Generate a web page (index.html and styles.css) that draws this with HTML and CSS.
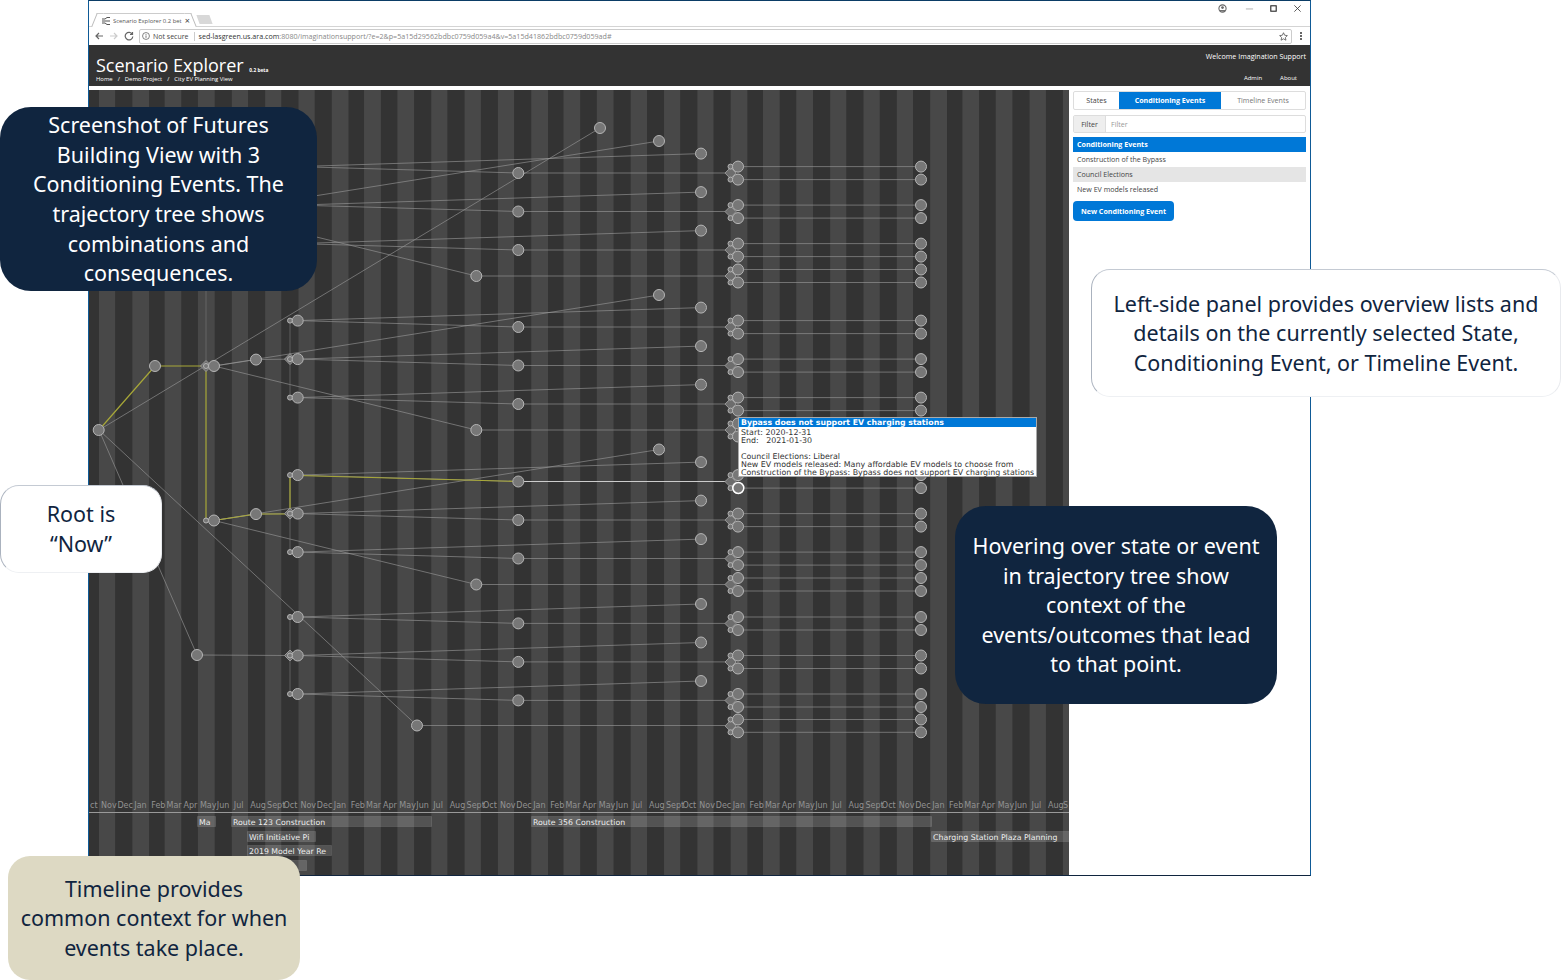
FILE: index.html
```html
<!DOCTYPE html>
<html lang="en">
<head>
    <meta charset="UTF-8">
    <meta name="viewport" content="width=device-width, initial-scale=1.0">
    <title>Scenario Explorer</title>
    <link rel="stylesheet" href="styles.css">
</head>
<body>
    <div class="browser">
        <!-- Tab strip -->
        <div class="tabstrip">
            <div class="tab">
                <svg class="tab-icon" viewBox="0 0 10 10" width="10" height="10">
                    <path d="M1 3h3M1 5h3M1 7h3M4 3l2-1.500h3M4 7l2 1.500h3M4 5h5" fill="none" stroke="#555" stroke-width="1"/>
                </svg>
                <span class="tab-title">Scenario Explorer 0.2 bet</span>
                <span class="tab-close">×</span>
            </div>
            <div class="new-tab"></div>
            <div class="window-controls">
                <svg class="account" viewBox="0 0 10 10" width="9" height="9"><circle cx="5" cy="5" r="4" fill="none" stroke="#666" stroke-width="1.200"/><circle cx="5" cy="4" r="1.500" fill="#666"/><path d="M2 7.500h6" stroke="#666" stroke-width="1.500"/></svg>
                <svg viewBox="0 0 10 10" width="9" height="9"><path d="M1 5.500h8" stroke="#aaa" stroke-width="1"/></svg>
                <svg viewBox="0 0 10 10" width="9" height="9"><rect x="2" y="2" width="6" height="6" fill="none" stroke="#222" stroke-width="1.200"/></svg>
                <svg viewBox="0 0 10 10" width="9" height="9"><path d="M1.500 1.500l7 7M8.500 1.500l-7 7" stroke="#333" stroke-width="0.900"/></svg>
            </div>
        </div>

        <!-- Address bar -->
        <div class="addressbar">
            <svg class="nav-icon" viewBox="0 0 10 10" width="10" height="10"><path d="M9 5H2M5 2L2 5l3 3" fill="none" stroke="#666" stroke-width="1.200"/></svg>
            <svg class="nav-icon" viewBox="0 0 10 10" width="10" height="10"><path d="M1 5h7M5 2l3 3-3 3" fill="none" stroke="#ccc" stroke-width="1.200"/></svg>
            <svg class="nav-icon" viewBox="0 0 10 10" width="10" height="10"><path d="M8.300 3.200A3.800 3.800 0 1 0 8.800 5.500M8.500 1v2.500H6" fill="none" stroke="#666" stroke-width="1.200"/></svg>
            <div class="omnibox">
                <svg viewBox="0 0 10 10" width="8" height="8"><circle cx="5" cy="5" r="4.300" fill="none" stroke="#555" stroke-width="0.900"/><path d="M5 4.300v3M5 2.500v1" stroke="#555" stroke-width="1"/></svg>
                <span class="not-secure">Not secure</span>
                <span class="url"><b>sed-lasgreen.us.ara.com</b>:8080/imaginationsupport/?e=2&amp;p=5a15d29562bdbc0759d059a4&amp;v=5a15d41862bdbc0759d059ad#</span>
                <svg class="star" viewBox="0 0 10 10" width="9" height="9"><path d="M5 .8l1.300 2.800 3 .4-2.200 2.100.6 3L5 7.600 2.300 9.100l.6-3L.7 4l3-.4z" fill="none" stroke="#555" stroke-width="0.900"/></svg>
            </div>
            <div class="menu-dots"><i></i><i></i><i></i></div>
        </div>

        <!-- App header -->
        <div class="app-header">
            <div class="brand">
                <div class="brand-title">Scenario Explorer <small>0.2 beta</small></div>
                <div class="crumbs"><span>Home</span><span>/</span><span>Demo Project</span><span>/</span><span>City EV Planning View</span></div>
            </div>
            <div class="user-area">
                <div>Welcome Imagination Support</div>
                <div class="user-links"><span>Admin</span><span>About</span></div>
            </div>
        </div>

        <div class="app-body">
            <div class="chart" id="chart">
                <div class="tooltip">
                    <div class="tooltip-title">Bypass does not support EV charging stations</div>
                    <div class="tooltip-text">Start: 2020-12-31
End:   2021-01-30

Council Elections: Liberal
New EV models released: Many affordable EV models to choose from
Construction of the Bypass: Bypass does not support EV charging stations</div>
                </div>
            </div>

            <!-- Right panel -->
            <div class="panel">
                <div class="panel-tabs">
                    <div class="panel-tab states">States</div>
                    <div class="panel-tab conditioning active">Conditioning Events</div>
                    <div class="panel-tab timeline">Timeline Events</div>
                </div>
                <div class="filter">
                    <div class="filter-label">Filter</div>
                    <div class="filter-input">Filter</div>
                </div>
                <div class="list">
                    <div class="list-item selected">Conditioning Events</div>
                    <div class="list-item">Construction of the Bypass</div>
                    <div class="list-item shaded">Council Elections</div>
                    <div class="list-item">New EV models released</div>
                </div>
                <div class="new-button">New Conditioning Event</div>
            </div>
        </div>
    </div>

    <!-- Callouts -->
    <div class="callout navy callout-futures">Screenshot of Futures<br>Building View with 3<br>Conditioning Events. The<br>trajectory tree shows<br>combinations and<br>consequences.</div>
    <div class="callout white callout-panel">Left-side panel provides overview lists and<br>details on the currently selected State,<br>Conditioning Event, or Timeline Event.</div>
    <div class="callout white callout-root">Root is<br>“Now”</div>
    <div class="callout navy callout-hover">Hovering over state or event<br>in trajectory tree show<br>context of the<br>events/outcomes that lead<br>to that point.</div>
    <div class="callout beige callout-timeline">Timeline provides<br>common context for when<br>events take place.</div>

    <script src="graph.js"></script>
</body>
</html>
```
FILE: styles.css
```css
/* General Styles */
* {
    margin: 0;
    padding: 0;
    box-sizing: border-box;
}

body {
    width: 1565px;
    height: 980px;
    background: #fff;
    font-family: "Open Sans", sans-serif;
    overflow: hidden;
    position: relative;
}

.browser {
    width: 1223px;
    height: 876px;
    margin-left: 88px;
    border: 1px solid #0f5a96;
    border-top-color: #0b3d66;
    border-bottom-color: #10253f;
    display: flex;
    flex-direction: column;
    background: #fff;
}

/* Tab strip */
.tabstrip {
    height: 26px;
    flex: none;
    display: flex;
    align-items: flex-end;
    padding-left: 9px;
    border-bottom: 1px solid #d4d4d4;
    position: relative;
}

.tab {
    width: 92px;
    height: 14px;
    display: flex;
    align-items: center;
    padding-left: 3px;
    gap: 2px;
    position: relative;
    margin-bottom: -1px;
    background: #fff;
    border-top: 1px solid #ccc;
}

.tab::before,
.tab::after {
    content: "";
    position: absolute;
    top: -1px;
    bottom: 0;
    width: 6px;
    background: #fff;
    border-top: 1px solid #ccc;
}

.tab::before {
    left: -4px;
    border-left: 1px solid #bbb;
    transform: skewX(-22deg);
}

.tab::after {
    right: -4px;
    border-right: 1px solid #bbb;
    transform: skewX(22deg);
}

.tab-icon {
    flex: none;
    position: relative;
    z-index: 1;
}

.tab-title {
    font-size: 5.900px;
    color: #555;
    white-space: nowrap;
    width: 70px;
    overflow: hidden;
}

.tab-close {
    font-size: 9px;
    color: #444;
    line-height: 1;
    position: relative;
    z-index: 1;
}

.new-tab {
    width: 13px;
    height: 9px;
    margin: 0 0 2px 8px;
    background: #d8d8d8;
    transform: skewX(20deg);
}

.window-controls {
    margin-left: auto;
    align-self: flex-start;
    padding: 3px 8px 0 0;
    display: flex;
    gap: 15px;
}

.window-controls .account {
    margin-right: 3px;
}

/* Address bar */
.addressbar {
    height: 18px;
    flex: none;
    display: flex;
    align-items: center;
    padding-left: 5px;
    gap: 5px;
    background: #fff;
}

.omnibox {
    width: 1153px;
    height: 15px;
    border: 1px solid #ccc;
    border-radius: 2px;
    display: flex;
    align-items: center;
    padding: 0 3px 0 2px;
    font-size: 7px;
    white-space: nowrap;
}

.not-secure {
    margin-left: 3px;
    padding-right: 5px;
    border-right: 1px solid #ccc;
    color: #444;
}

.url {
    margin-left: 4px;
    color: #888;
    font-size: 7.130px;
}

.url b {
    font-weight: 400;
    color: #333;
}

.star {
    margin-left: auto;
}

.menu-dots {
    display: flex;
    flex-direction: column;
    gap: 1px;
    margin-left: 3px;
}

.menu-dots i {
    width: 2px;
    height: 2px;
    background: #666;
}

/* App header */
.app-header {
    height: 41px;
    flex: none;
    background: #333;
    color: #fff;
    display: flex;
    justify-content: space-between;
    padding: 0 4px 0 7px;
}

.brand-title {
    font-size: 18px;
    line-height: 20px;
    margin-top: 10px;
    white-space: nowrap;
}

.brand-title small {
    font-size: 4.800px;
    font-weight: 700;
    line-height: 0;
    margin-left: 1px;
}

.crumbs {
    font-size: 5.900px;
    font-weight: 500;
    line-height: 9px;
    display: flex;
    gap: 5px;
}

.user-area {
    font-size: 7.100px;
    text-align: right;
    padding-top: 6px;
}

.user-links {
    display: flex;
    justify-content: flex-end;
    gap: 18px;
    padding: 13px 9px 0 0;
    font-size: 6px;
}

/* Chart */
.app-body {
    flex: 1;
    display: flex;
    padding-top: 4px;
    min-height: 0;
}

.chart {
    width: 980px;
    flex: none;
    position: relative;
    background: #333;
    overflow: hidden;
}

.chart svg {
    display: block;
}

.month {
    font: 8px "DejaVu Sans", sans-serif;
    fill: #929292;
}

.bar {
    fill: rgba(255, 255, 255, 0.16);
    stroke: rgba(255, 255, 255, 0.1);
}

.bar-label {
    font: 7.800px "DejaVu Sans", sans-serif;
    fill: #eee;
}

.edge {
    stroke: #999;
    stroke-opacity: 0.62;
    fill: none;
}

.edge.faint {
    stroke: #777;
}

.edge.picked {
    stroke: #a8a838;
    stroke-opacity: 1;
    stroke-width: 1.200;
}

.edge.lit {
    stroke: #ccc;
    stroke-opacity: 1;
}

.node {
    fill: #777;
    stroke: #b5b5b5;
}

.node.hover {
    stroke: #fff;
    stroke-width: 1.500;
}

.diamond {
    fill: #6d6d6d;
    stroke: #999;
}

/* Tooltip */
.tooltip {
    position: absolute;
    left: 649px;
    top: 327px;
    width: 299px;
    height: 60px;
    background: #fff;
    border: 1px solid #aaa;
    font-family: "DejaVu Sans", sans-serif;
    font-size: 7.900px;
    line-height: 8px;
    color: #333;
    z-index: 2;
}

.tooltip-title {
    background: #0078d7;
    color: #fff;
    font-size: 7.800px;
    font-weight: 700;
    height: 9px;
    line-height: 9px;
    padding-left: 2px;
    margin-bottom: 2px;
}

.tooltip-text {
    padding-left: 2px;
    white-space: pre;
}

/* Right panel */
.panel {
    flex: 1;
    padding: 1px 4px 0;
    font-size: 7.100px;
    color: #444;
}

.panel-tabs {
    height: 19px;
    display: flex;
    border: 1px solid #ddd;
    border-radius: 2px;
}

.panel-tab {
    display: flex;
    align-items: center;
    justify-content: center;
    padding-bottom: 1px;
}

.panel-tab.states {
    width: 45px;
}

.panel-tab.conditioning {
    width: 102px;
}

.panel-tab.timeline {
    flex: 1;
    color: #777;
}

.panel-tab.active {
    background: #0078d7;
    color: #fff;
    font-weight: 700;
}

.filter {
    height: 18px;
    margin-top: 5px;
    display: flex;
    border: 1px solid #ddd;
    border-radius: 2px;
}

.filter-label {
    width: 32px;
    background: #eee;
    border-right: 1px solid #ddd;
    display: flex;
    align-items: center;
    justify-content: center;
}

.filter-input {
    flex: 1;
    color: #999;
    display: flex;
    align-items: center;
    padding-left: 5px;
}

.list {
    margin-top: 4px;
}

.list-item {
    height: 15px;
    line-height: 15px;
    padding-left: 4px;
}

.list-item.selected {
    background: #0078d7;
    color: #fff;
    font-weight: 700;
}

.list-item.shaded {
    background: #e5e5e5;
}

.new-button {
    width: 101px;
    height: 20px;
    margin-top: 4px;
    background: #0078d7;
    color: #fff;
    font-weight: 700;
    border-radius: 4px;
    display: flex;
    align-items: center;
    justify-content: center;
}

/* Callouts */
.callout {
    position: absolute;
    display: flex;
    align-items: center;
    justify-content: center;
    text-align: center;
    font-family: "Noto Sans", sans-serif;
    font-size: 21.500px;
    line-height: 29.600px;
    z-index: 5;
    white-space: nowrap;
}

.callout.navy {
    background: #10253f;
    color: #fff;
    border-radius: 31px;
}

.callout.white {
    background: #fff;
    color: #10253f;
    border: 1px solid;
    border-color: #c4cad3 #e8eaee #eef0f3 #aab2be;
    border-radius: 19px;
}

.callout.beige {
    background: #ddd9c3;
    color: #10253f;
    border-radius: 22px;
}

.callout-futures {
    left: 0;
    top: 107px;
    width: 317px;
    height: 184px;
}

.callout-panel {
    left: 1091px;
    top: 269px;
    width: 470px;
    height: 128px;
}

.callout-root {
    left: 0;
    top: 485px;
    width: 162px;
    height: 88px;
}

.callout-hover {
    left: 955px;
    top: 506px;
    width: 322px;
    height: 198px;
}

.callout-timeline {
    left: 8px;
    top: 856px;
    width: 292px;
    height: 124px;
}
```
FILE: graph.js
```js
// draws the trajectory tree, month stripes and timeline into #chart
var SVG_NS = "http://www.w3.org/2000/svg";
var chart = document.getElementById("chart");

var svg = document.createElementNS(SVG_NS, "svg");
svg.setAttribute("width", 980);
svg.setAttribute("height", 785);
svg.setAttribute("viewBox", "89 90 980 785");
chart.insertBefore(svg, chart.firstChild);

function add(tag, attrs, text) {
    var el = document.createElementNS(SVG_NS, tag);
    for (var k in attrs) el.setAttribute(k, attrs[k]);
    if (text) el.textContent = text;
    svg.appendChild(el);
    return el;
}

// month stripes, first Nov sits at x=99
var names = ["Nov", "Dec", "Jan", "Feb", "Mar", "Apr", "May", "Jun", "Jul", "Aug", "Sept", "Oct"];
var days = [30, 31, 31, 28, 31, 30, 31, 31, 30, 31, 30, 31];
var pxPerDay = 199.45 / 365;
var months = [];
var mx = 99 - 31 * pxPerDay;
months.push({ x: mx, w: 31 * pxPerDay, name: "", light: false });
mx = 99;
var i = 0;
while (mx < 1069) {
    var m = i % 12;
    months.push({ x: mx, w: days[m] * pxPerDay, name: names[m], light: i % 2 === 0 });
    mx += days[m] * pxPerDay;
    i++;
}
months.forEach(function (m) {
    add("rect", { x: m.x, y: 90, width: m.w, height: 785, fill: m.light ? "#484848" : "#333" });
});

// edges and nodes are collected first so the nodes end up on top
var nodes = [];
var smalls = [];
var diamonds = [];

function edge(x1, y1, x2, y2, cls) {
    add("line", { x1: x1, y1: y1, x2: x2, y2: y2, "class": "edge " + (cls || "") });
}

// one fan: two end states behind a diamond at x=731
function fan(y1, y2) {
    var mid = (y1 + y2) / 2;
    edge(730.5, y1, 730.5, y2, "faint");
    [y1, y2].forEach(function (y) {
        edge(738, y, 921, y);
        nodes.push([738, y]);
        nodes.push([921, y]);
        smalls.push([730.5, y]);
    });
    diamonds.push([730.5, mid, false]);
}

// the block of three states hanging off one x=290 diamond
function block(y0, feedX, feedY) {
    var ys = [y0, y0 + 38.5, y0 + 77];
    edge(290, ys[0], 290, ys[2], "faint");
    edge(feedX, feedY, 290, ys[1]);
    ys.forEach(function (y, n) {
        edge(290, y, 297.7, y);
        edge(297.7, y, 518.3, y + 6.4);
        edge(518.3, y + 6.4, 730.5, y + 6.4);
        edge(297.7, y, 701, y - 13);
        nodes.push([297.7, y]);
        nodes.push([518.3, y + 6.4]);
        nodes.push([701, y - 13]);
        if (n !== 1) smalls.push([290, y]);
        fan(y, y + 13);
    });
    diamonds.push([290, ys[1], true]);
}

// a branch under the x=206 column: state, outcome, the far ones
function branch(yb) {
    edge(206, yb, 214, yb);
    nodes.push([214, yb]);
    edge(214, yb, 256, yb - 6.4);
    nodes.push([256, yb - 6.4]);
    edge(214, yb, 659, yb - 71);
    nodes.push([659, yb - 71]);
    edge(214, yb, 476.3, yb + 64);
    nodes.push([476.3, yb + 64]);
    edge(476.3, yb + 64, 730.5, yb + 64);
    block(yb - 45.4, 256, yb - 6.4);
    fan(yb + 57.5, yb + 70.5);
}

// root and first level
edge(99, 430, 600, 128);
edge(99, 430, 197, 655);
edge(99, 430, 417, 725.5);
edge(417, 725.5, 730.5, 725.5);
edge(206, 212, 206, 366, "faint");
nodes.push([98.7, 430], [155, 366], [197, 655], [600, 128], [417, 725.5]);

branch(212);
branch(366);
branch(520.5);

block(617, 197, 655);
fan(719.5, 732.3);

smalls.push([206, 212], [206, 520.5]);
diamonds.push([206, 366, true]);

// picked path up to the hovered state
edge(99, 430, 155, 366, "picked");
edge(155, 366, 206, 366, "picked");
edge(206, 366, 206, 520.5, "picked");
edge(206, 520.5, 214, 520.5, "picked");
edge(214, 520.5, 256, 514, "picked");
edge(256, 514, 290, 514, "picked");
edge(290, 514, 290, 475.5, "picked");
edge(290, 475.5, 297.7, 475.5, "picked");
edge(297.7, 475.5, 518.3, 481.5, "picked");
edge(518.3, 481.5, 730.5, 481.5, "lit");
edge(730.5, 481.5, 738, 488.3, "lit");

diamonds.forEach(function (d) {
    var x = d[0], y = d[1], s = 5.5;
    add("polygon", { points: (x - s) + "," + y + " " + x + "," + (y - s) + " " + (x + s) + "," + y + " " + x + "," + (y + s), "class": "diamond" });
    if (d[2]) add("circle", { cx: x, cy: y, r: 2.5, "class": "node" });
});
smalls.forEach(function (p) {
    add("circle", { cx: p[0], cy: p[1], r: 2.5, "class": "node" });
});
nodes.forEach(function (p) {
    add("circle", { cx: p[0], cy: p[1], r: 5.5, "class": "node" });
});
add("circle", { cx: 738.3, cy: 488, r: 5.5, "class": "node hover" });

// timeline, the two ends of the axis show only what fits inside the chart
months.forEach(function (m) {
    if (m.name && m.x + 2 < 1062) add("text", { x: m.x + 2, y: 808, "class": "month" }, m.name);
});
add("text", { x: 90, y: 808, "class": "month" }, "ct");
add("text", { x: 1063, y: 808, "class": "month" }, "S");
add("line", { x1: 89, y1: 812.5, x2: 1069, y2: 812.5, stroke: "#999" });

var bars = [
    [197, 816, 18, "Ma"],
    [231, 816, 200, "Route 123 Construction"],
    [531, 816, 400, "Route 356 Construction"],
    [247, 831, 68, "Wifi Initiative Pi"],
    [931, 831, 138, "Charging Station Plaza Planning"],
    [247, 845, 84, "2019 Model Year Re"],
    [247, 860, 59, ""]
];
bars.forEach(function (b) {
    add("rect", { x: b[0] + 0.5, y: b[1] + 0.5, width: b[2], height: 10, "class": "bar" });
    if (b[3]) add("text", { x: b[0] + 2, y: b[1] + 9, "class": "bar-label" }, b[3]);
});
```
